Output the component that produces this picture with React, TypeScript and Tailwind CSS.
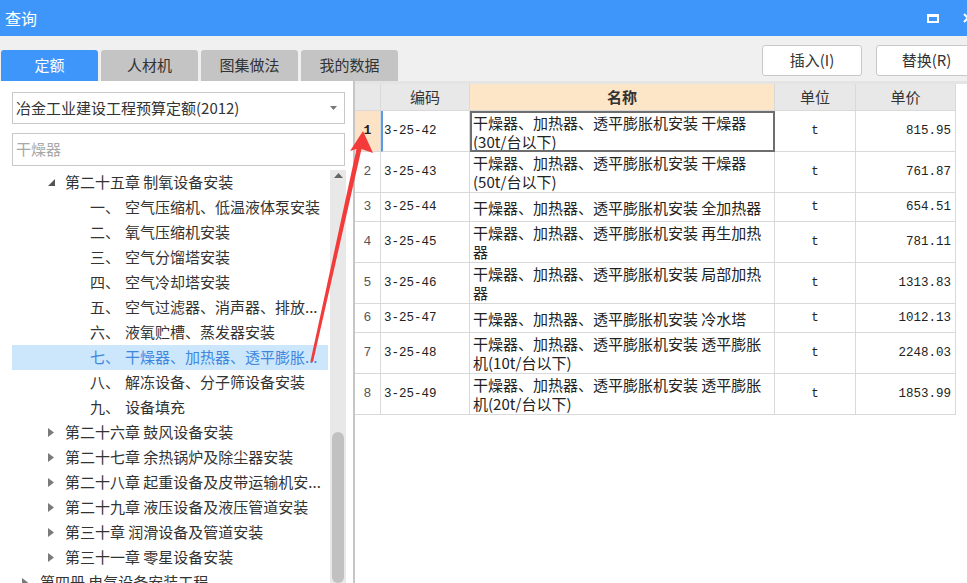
import React from "react"

const font = "font-['Noto_Sans_CJK_SC','Noto_Sans',sans-serif]"
const mono = "font-['Liberation_Mono','Noto_Sans_CJK_SC',monospace]"

type Row = { n: number; code: string; l1: string; l2?: string; price: string }

const rows: Row[] = [
  { n: 1, code: "3-25-42", l1: "干燥器、加热器、透平膨胀机安装 干燥器", l2: "(30t/台以下)", price: "815.95" },
  { n: 2, code: "3-25-43", l1: "干燥器、加热器、透平膨胀机安装 干燥器", l2: "(50t/台以下)", price: "761.87" },
  { n: 3, code: "3-25-44", l1: "干燥器、加热器、透平膨胀机安装 全加热器", price: "654.51" },
  { n: 4, code: "3-25-45", l1: "干燥器、加热器、透平膨胀机安装 再生加热", l2: "器", price: "781.11" },
  { n: 5, code: "3-25-46", l1: "干燥器、加热器、透平膨胀机安装 局部加热", l2: "器", price: "1313.83" },
  { n: 6, code: "3-25-47", l1: "干燥器、加热器、透平膨胀机安装 冷水塔", price: "1012.13" },
  { n: 7, code: "3-25-48", l1: "干燥器、加热器、透平膨胀机安装 透平膨胀", l2: "机(10t/台以下)", price: "2248.03" },
  { n: 8, code: "3-25-49", l1: "干燥器、加热器、透平膨胀机安装 透平膨胀", l2: "机(20t/台以下)", price: "1853.99" },
]

const subs = [
  ["一、", "空气压缩机、低温液体泵安装"],
  ["二、", "氧气压缩机安装"],
  ["三、", "空气分馏塔安装"],
  ["四、", "空气冷却塔安装"],
  ["五、", "空气过滤器、消声器、排放..."],
  ["六、", "液氧贮槽、蒸发器安装"],
  ["七、", "干燥器、加热器、透平膨胀..."],
  ["八、", "解冻设备、分子筛设备安装"],
  ["九、", "设备填充"],
]

const chapters = [
  "第二十六章 鼓风设备安装",
  "第二十七章 余热锅炉及除尘器安装",
  "第二十八章 起重设备及皮带运输机安...",
  "第二十九章 液压设备及液压管道安装",
  "第三十章 润滑设备及管道安装",
  "第三十一章 零星设备安装",
]

const Collapsed = () => (
  <svg width="6" height="9" viewBox="0 0 6 9">
    <polygon points="0,0 6,4.5 0,9" fill="#7a7a7a" />
  </svg>
)

const Expanded = () => (
  <svg width="7" height="7" viewBox="0 0 7 7">
    <polygon points="7,0 7,7 0,7" fill="#555" />
  </svg>
)

const Tabs = () => (
  <div className="flex gap-[3px] pl-[1px] self-end">
    <div className="w-[97px] h-[31px] rounded-t-[3px] bg-[#3e96fb] text-white text-[15px] flex items-center justify-center">定额</div>
    <div className="w-[97px] h-[31px] rounded-t-[3px] bg-[#c4c4c4] text-[#333] text-[15px] flex items-center justify-center">人材机</div>
    <div className="w-[97px] h-[31px] rounded-t-[3px] bg-[#c4c4c4] text-[#333] text-[15px] flex items-center justify-center">图集做法</div>
    <div className="w-[97px] h-[31px] rounded-t-[3px] bg-[#c4c4c4] text-[#333] text-[15px] flex items-center justify-center">我的数据</div>
  </div>
)

const LeftPanel = () => (
  <div className="w-[355px] shrink-0 bg-white flex flex-col border-r-2 border-[#c6c6c6]">
    <div className="ml-[12px] mr-[8px] mt-[11px] h-[32px] border border-[#c8c8c8] flex items-center pl-[3px] pr-[7px] text-[15px] text-[#333]">
      <span>冶金工业建设工程预算定额(2012)</span>
      <svg className="ml-auto" width="7" height="4" viewBox="0 0 7 4">
        <polygon points="0,0 7,0 3.5,4" fill="#777" />
      </svg>
    </div>
    <div className="ml-[12px] mr-[8px] mt-[9px] h-[33px] border border-[#c8c8c8] flex items-center pl-[3px] text-[15px] text-[#a8a8a8]">
      干燥器
    </div>
    <div className="flex flex-1 mt-[4px] pl-[12px] min-h-0">
      <div className="w-[316px] text-[15px] text-[#333]">
        <div className="h-[25px] flex items-center">
          <span className="w-[36px]" />
          <span className="w-[17px] flex"><Expanded /></span>
          <span>第二十五章 制氧设备安装</span>
        </div>
        {subs.map(([num, text], i) => (
          <div
            key={num}
            className={
              i === 6
                ? "h-[25px] flex items-center bg-[#cce6fc] text-[#3f86dc]"
                : "h-[25px] flex items-center"
            }
          >
            <span className="w-[78px]" />
            <span className="w-[35px]">{num}</span>
            <span className="whitespace-nowrap">{text}</span>
          </div>
        ))}
        {chapters.map((c) => (
          <div key={c} className="h-[25px] flex items-center">
            <span className="w-[36px]" />
            <span className="w-[17px] flex"><Collapsed /></span>
            <span className="whitespace-nowrap">{c}</span>
          </div>
        ))}
        <div className="h-[25px] flex items-center">
          <span className="w-[10px]" />
          <span className="w-[18px] flex"><Collapsed /></span>
          <span className="whitespace-nowrap">第四册 电气设备安装工程</span>
        </div>
      </div>
      <div className="ml-[2px] w-[16px] bg-[#e8e8e8] flex flex-col items-center">
        <svg className="mt-[3px]" width="9" height="5" viewBox="0 0 9 5">
          <polygon points="0,5 9,5 4.5,0" fill="#666" />
        </svg>
        <div className="mt-[254px] w-[12px] flex-1 rounded-full bg-[#c1c1c1]" />
      </div>
    </div>
  </div>
)

const cell = "border-r border-b border-[#d9d9d9]"

const Table = () => (
  <div className="flex-1 bg-white border-t-[3px] border-[#e4e4e4]">
    <div className={`grid grid-cols-[26px_89px_305px_81px_100px] h-[27px] text-[15px] text-[#333]`}>
      <div className={`${cell} bg-[#e8e8e8]`} />
      <div className={`${cell} bg-[#e8e8e8] flex items-center justify-center`}>编码</div>
      <div className={`${cell} bg-[#fde5c8] flex items-center justify-center font-bold`}>名称</div>
      <div className={`${cell} bg-[#e8e8e8] flex items-center justify-center`}>单位</div>
      <div className={`${cell} bg-[#e8e8e8] flex items-center justify-center`}>单价</div>
    </div>
    {rows.map((r) => (
      <div
        key={r.n}
        className={
          r.l2
            ? "grid grid-cols-[26px_89px_305px_81px_100px] h-[41px] text-[#222]"
            : "grid grid-cols-[26px_89px_305px_81px_100px] h-[29px] text-[#222]"
        }
      >
        <div
          className={
            r.n === 1
              ? `${cell} bg-[#fce3c6] flex items-center justify-center text-[13px] font-bold text-[#222] ${mono}`
              : `${cell} flex items-center justify-center text-[13px] text-[#555] ${mono}`
          }
        >
          {r.n}
        </div>
        <div
          className={
            r.n === 1
              ? `${cell} border-l-2 border-l-[#5b9be6] flex items-center pl-[1px] text-[12.5px] ${mono}`
              : `${cell} flex items-center pl-[3px] text-[12.5px] ${mono}`
          }
        >
          {r.code}
        </div>
        <div
          className={
            r.n === 1
              ? "border-2 border-[#6e6e6e] flex flex-col justify-center pl-[1px] text-[15px] leading-[19px] whitespace-nowrap overflow-hidden"
              : `${cell} flex flex-col justify-center pl-[3px] text-[15px] leading-[19px] whitespace-nowrap overflow-hidden`
          }
        >
          <span>{r.l1}</span>
          {r.l2 && <span>{r.l2}</span>}
        </div>
        <div className={`${cell} flex items-center justify-center text-[12.5px] ${mono}`}>t</div>
        <div className={`${cell} flex items-center justify-end pr-[4px] text-[12.5px] ${mono}`}>{r.price}</div>
      </div>
    ))}
  </div>
)

export default function App() {
  return (
    <div className={`relative w-[967px] h-[583px] overflow-hidden bg-[#f0f0f0] flex flex-col ${font}`}>
      <div className="h-[36px] shrink-0 bg-[#3e96fb] flex items-center pl-[5px] text-white text-[16px]">
        <span>查询</span>
        <div className="ml-auto mr-[24px] w-[12px] h-[9px] border-2 border-t-[3px] border-white" />
        <svg className="-mr-[6px]" width="10" height="10" viewBox="0 0 10 10">
          <path d="M1 1 L9 9 M9 1 L1 9" stroke="white" strokeWidth="2" />
        </svg>
      </div>
      <div className="h-[45px] shrink-0 flex">
        <Tabs />
        <div className="ml-auto mt-[9px] -mr-[10px] flex gap-[14px]">
          <div className="w-[100px] h-[31px] rounded-[3px] border border-[#c8c8c8] bg-white flex items-center justify-center text-[15px] text-[#333]">插入(I)</div>
          <div className="w-[101px] h-[31px] rounded-[3px] border border-[#c8c8c8] bg-white flex items-center justify-center text-[15px] text-[#333]">替换(R)</div>
        </div>
      </div>
      <div className="flex flex-1 min-h-0">
        <LeftPanel />
        <Table />
      </div>
      <svg className="absolute inset-0 pointer-events-none" width="967" height="583" viewBox="0 0 967 583">
        <polygon
          points="363,131 373,153 361.5,149 313,362 310.5,361 356.5,149 350,151"
          fill="#f43b3b"
        />
      </svg>
    </div>
  )
}
